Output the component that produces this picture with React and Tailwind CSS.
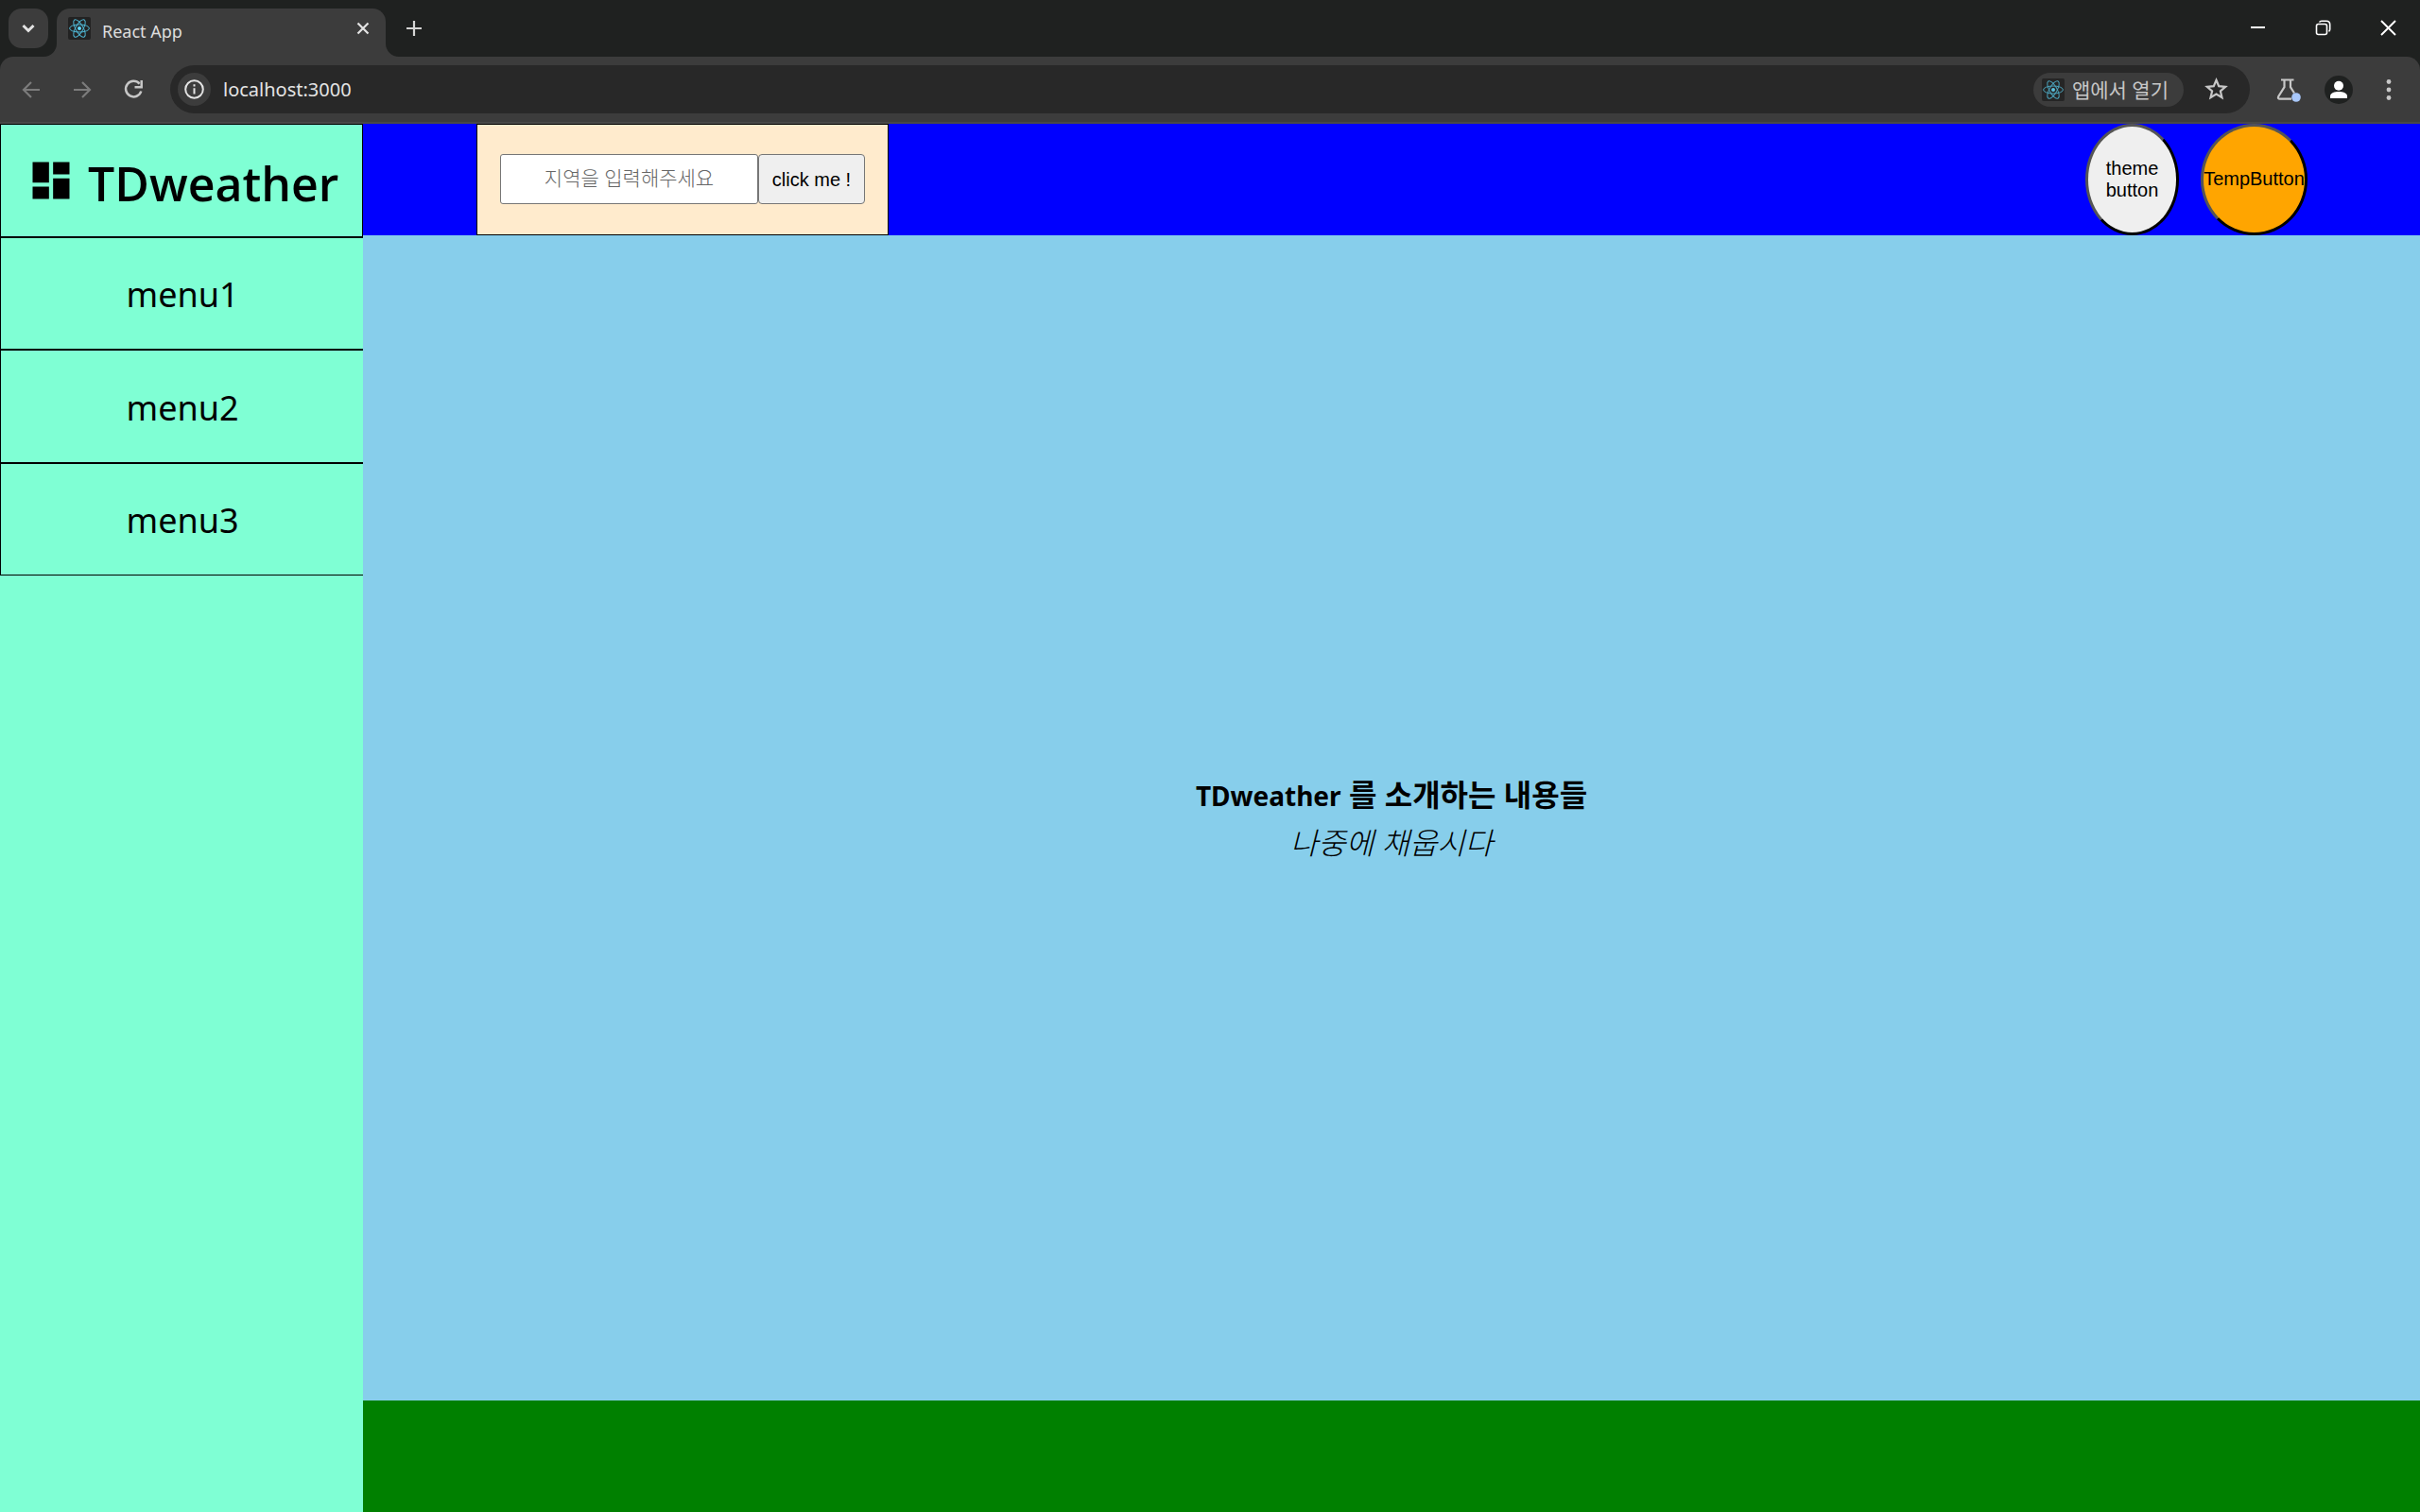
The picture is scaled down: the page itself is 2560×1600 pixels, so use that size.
import React from "react";
import { MdDashboard } from "react-icons/md";

const menus = ["menu1", "menu2", "menu3"];

function ReactLogo({ className }) {
  return (
    <svg viewBox="0 0 24 24" className={className} aria-hidden="true">
      <rect width="24" height="24" rx="2" fill="#222222" />
      <g fill="none" stroke="#4fb6d3" strokeWidth="1">
        <ellipse cx="12" cy="12" rx="10.4" ry="4" />
        <ellipse cx="12" cy="12" rx="10.4" ry="4" transform="rotate(60 12 12)" />
        <ellipse cx="12" cy="12" rx="10.4" ry="4" transform="rotate(120 12 12)" />
      </g>
      <circle cx="12" cy="12" r="2" fill="#61dafb" />
    </svg>
  );
}

function Icon({ className, viewBox = "0 0 24 24", width = 2.6, children }) {
  return (
    <svg viewBox={viewBox} className={className} fill="none" stroke="currentColor" strokeWidth={width} aria-hidden="true">
      {children}
    </svg>
  );
}

function TabStrip() {
  return (
    <div className="flex h-[60px] items-start bg-[#1f2120] pt-[9px]">
      <button aria-label="Search tabs" className="ml-[9px] mr-[9px] flex size-[42px] shrink-0 items-center justify-center rounded-[14px] bg-[#3c3c3c] text-[#e3e3e3]">
        <Icon className="h-[12px] w-[16px]" viewBox="0 0 16 12" width={3}><path d="M2.5 3 8 8.5 13.5 3" /></Icon>
      </button>
      <div className="relative flex h-[51px] w-[348px] items-start rounded-t-[14px] bg-[#3c3c3c] pt-[9px]">
        <svg viewBox="0 0 14 14" className="absolute bottom-0 -left-[14px] size-[14px]" fill="#3c3c3c" aria-hidden="true"><path d="M14 0v14H0A14 14 0 0 0 14 0Z" /></svg>
        <svg viewBox="0 0 14 14" className="absolute -right-[14px] bottom-0 size-[14px]" fill="#3c3c3c" aria-hidden="true"><path d="M0 0v14h14A14 14 0 0 1 0 0Z" /></svg>
        <ReactLogo className="ml-[12px] size-[24px]" />
        <span className="ml-[12px] flex-1 text-[18px] leading-[30px] text-[#dedede]">React App</span>
        <button aria-label="Close tab" className="mr-[16px] mt-[4px] text-[#e3e3e3]">
          <Icon className="size-[16px]" viewBox="0 0 16 16" width={2.2}><path d="m2.5 2.5 11 11M13.500 2.5l-11 11" /></Icon>
        </button>
      </div>
      <button aria-label="New tab" className="ml-[22px] mt-[13px] text-[#d5d5d5]">
        <Icon className="size-[16px]" viewBox="0 0 16 16" width={2.2}><path d="M8 0v16M0 8h16" /></Icon>
      </button>
      <div className="ml-auto mr-[25px] mt-[12px] flex items-center gap-[52px] text-white">
        <button aria-label="Minimize"><Icon className="size-[17px]" viewBox="0 0 17 17" width={2}><path d="M1 8h15" /></Icon></button>
        <button aria-label="Restore">
          <Icon className="size-[17px]" viewBox="0 0 17 17" width={1.600}>
            <rect x="1.500" y="4.500" width="11" height="11" rx="2" />
            <path d="M4.500 2.500C5 1.500 6 1.300 7 1.300h5c2.200 0 3.700 1.500 3.700 3.700v5c0 1-.4 1.800-1.200 2.300" />
          </Icon>
        </button>
        <button aria-label="Close"><Icon className="size-[17px]" viewBox="0 0 17 17" width={1.900}><path d="m1 1 15 15M16 1 1 16" /></Icon></button>
      </div>
    </div>
  );
}

function Toolbar() {
  return (
    <div className="bg-[#1f2120]">
      <div className="flex h-[71px] items-center rounded-t-[14px] border-b-2 border-[#484848] bg-[#3c3c3c] text-[#c7c7c7]">
        <div className="flex items-center gap-[34px] pl-[23px] pr-[28px]">
          <button aria-label="Back" className="text-[#7c7c7c]"><Icon className="size-[20px]" viewBox="0 0 20 20" width={2.200}><path d="M19 10H2.500M10 2l-8 8 8 8" /></Icon></button>
          <button aria-label="Forward" className="text-[#7c7c7c]"><Icon className="size-[20px]" viewBox="0 0 20 20" width={2.200}><path d="M1 10h16.500M10 2l8 8-8 8" /></Icon></button>
          <button aria-label="Reload">
            <Icon className="size-[21px]" viewBox="0 0 21 21" width={2.500}>
              <path d="M16.600 4.600A8.300 8.300 0 1 0 18.300 12.500" /><path d="M18.700 1v7.200h-7.200" />
            </Icon>
          </button>
        </div>
        <div className="flex h-[51px] flex-1 items-center rounded-full bg-[#282828] pl-[8px] pr-[23px]">
          <button aria-label="Site information" className="flex size-[35px] items-center justify-center rounded-full bg-[#3c3c3c] text-[#e3e3e3]">
            <Icon className="size-[21px]" viewBox="0 0 21 21" width={2}>
              <circle cx="10.500" cy="10.500" r="9.300" /><path d="M10.500 9.300v6.200M10.500 5.300v2.200" />
            </Icon>
          </button>
          <input aria-label="Address" defaultValue="localhost:3000" className="ml-[13px] min-w-0 flex-1 bg-transparent text-[20px] leading-[28px] text-[#e3e3e3] outline-none" />
          <button className="mr-[22px] flex h-[36px] items-center gap-[8px] rounded-full bg-[#3c3c3c] pl-[9px] pr-[16px] text-[21px] leading-[28px]">
            <ReactLogo className="size-[24px] opacity-85" />
            앱에서 열기
          </button>
          <button aria-label="Bookmark">
            <Icon className="size-[25px]" viewBox="0 0 25 25" width={2.200}>
              <path d="m12.500 2.800 2.700 6.400 7 .6-5.300 4.600 1.600 6.800-6-3.600-6 3.600 1.600-6.800L2.800 9.800l7-.6Z" />
            </Icon>
          </button>
        </div>
        <button aria-label="Experiments" className="ml-[28px]">
          <Icon className="size-[27px]" viewBox="0 0 27 27" width={2.200}>
            <path d="M5 3.500h13.500M8.500 3.500v7.700L2.300 21c-.9 1.700-.2 2.700 1.500 2.700H16M15 3.500v7.700l4 6.300" />
            <circle cx="21" cy="22" r="4.800" fill="#a8c7fa" stroke="none" />
          </Icon>
        </button>
        <button aria-label="Profile" className="ml-[24px]">
          <svg viewBox="0 0 30 30" className="size-[30px]" aria-hidden="true">
            <circle cx="15" cy="15" r="15" fill="#1f2120" /><circle cx="15" cy="10.800" r="5" fill="#fff" />
            <path d="M6 24v-2.300c0-3.500 5-4.700 9-4.700s9 1.200 9 4.700V24Z" fill="#fff" />
          </svg>
        </button>
        <button aria-label="Menu" className="ml-[35px] mr-[30px]">
          <svg viewBox="0 0 6 22" className="h-[22px] w-[6px]" fill="currentColor" aria-hidden="true"><circle cx="3" cy="2.500" r="2.400" /><circle cx="3" cy="11" r="2.400" /><circle cx="3" cy="19.500" r="2.400" /></svg>
        </button>
      </div>
    </div>
  );
}

function Sidebar() {
  return (
    <nav className="w-[15%] shrink-0 overflow-hidden bg-[#7fffd4]">
      <div className="box-content h-[8%] border-y border-black">
        <div className="flex h-full items-center border-x border-black pl-[27px]">
          <MdDashboard className="size-[52px] shrink-0" />
          <h1 className="ml-[13px] pt-[6px] text-[50px] leading-[64px] font-semibold font-['Open_Sans','Noto_Sans',sans-serif]">TDweather</h1>
        </div>
      </div>
      {menus.map((menu) => (
        <a key={menu} href={"#" + menu} className="box-content flex h-[8%] w-full items-center justify-center border border-black text-[36px] leading-[48px]">
          <span className="pt-[4px]">{menu}</span>
        </a>
      ))}
    </nav>
  );
}

function Header() {
  return (
    <header className="flex h-[8%] items-stretch justify-between bg-[#0000ff] pr-[119px] pl-[120px] text-[20px]">
      <form className="flex w-[436px] items-center border border-black bg-[#ffebcd] px-[24px]">
        <input aria-label="지역" placeholder="지역을 입력해주세요" className="h-[53px] min-w-0 flex-1 rounded-[3px] border border-[#767676] bg-white pb-[4px] text-center text-[21px] placeholder:font-light placeholder:text-[#666]" />
        <button type="button" className="h-[53px] w-[113px] rounded-[4px] border border-[#767676] bg-[#efefef] font-['Liberation_Sans',sans-serif]">click me !</button>
      </form>
      <div className="flex gap-[23px] font-['Liberation_Sans',sans-serif] leading-[23px]">
        <button className="w-[99px] rounded-[50%] border-3 border-t-[#555] border-r-black border-b-black border-l-[#555] bg-[#efefef] px-[12px]">theme button</button>
        <button className="flex w-[113px] items-center justify-center rounded-[50%] border-3 border-t-[#555] border-r-black border-b-black border-l-[#555] bg-[#ffa500]">TempButton</button>
      </div>
    </header>
  );
}

export default function App() {
  return (
    <div className="flex h-screen flex-col overflow-hidden font-['Noto_Sans','Noto_Sans_CJK_KR',sans-serif] text-black">
      <TabStrip />
      <Toolbar />
      <div className="flex min-h-0 flex-1">
        <Sidebar />
        <div className="flex min-w-0 flex-1 flex-col">
          <Header />
          <main className="flex flex-1 flex-col items-center justify-center bg-[#87ceeb] pt-[2px] text-[32px] leading-[50px]">
            <h2 className="font-bold"><span className="text-[28px]">TDweather</span> 를 소개하는 내용들</h2>
            <p className="font-light italic">나중에 채웁시다</p>
          </main>
          <footer className="h-[8%] bg-[#008000]" />
        </div>
      </div>
    </div>
  );
}
